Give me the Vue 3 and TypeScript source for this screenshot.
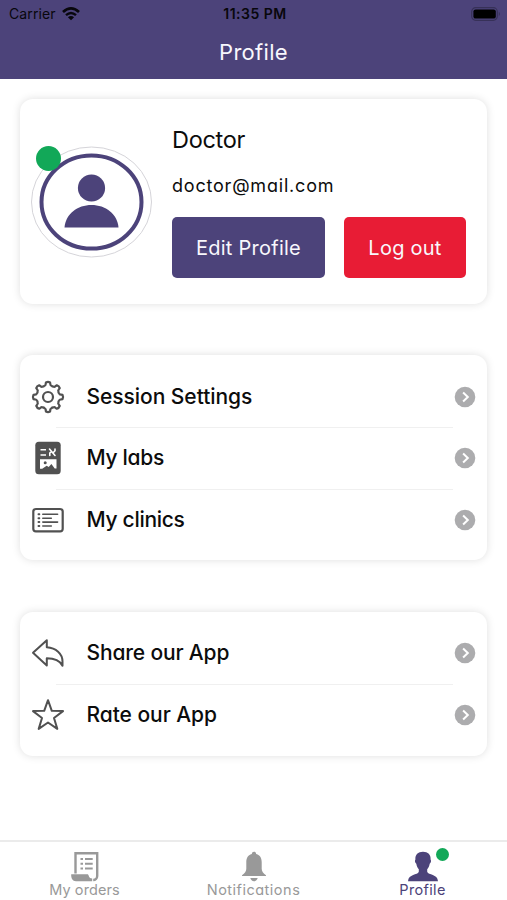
<script setup lang="ts">
interface MenuItem {
  icon: 'gear' | 'labs' | 'clinics' | 'share' | 'star'
  label: string
  cls: string
}

const groups: MenuItem[][] = [
  [
    { icon: 'gear', label: 'Session Settings', cls: 't-session' },
    { icon: 'labs', label: 'My labs', cls: 't-labs' },
    { icon: 'clinics', label: 'My clinics', cls: 't-clinics' },
  ],
  [
    { icon: 'share', label: 'Share our App', cls: 't-share' },
    { icon: 'star', label: 'Rate our App', cls: 't-rate' },
  ],
]

// Outline of an eight-toothed gear centred on (17, 17)
function gearPath(): string {
  const at = (deg: number, r: number): string => {
    const a = ((deg - 90) * Math.PI) / 180
    return `${(17 + r * Math.cos(a)).toFixed(2)} ${(17 + r * Math.sin(a)).toFixed(2)}`
  }
  let d = ''
  for (let k = 0; k < 8; k++) {
    const c = k * 45
    d += `${k ? 'L' : 'M'}${at(c - 10, 13.2)}L${at(c - 8, 14.7)}Q${at(c, 15.6)} ${at(c + 8, 14.7)}L${at(c + 10, 13.2)}`
    d += `Q${at(c + 12, 11.7)} ${at(c + 17, 11.8)}Q${at(c + 22.5, 11)} ${at(c + 28, 11.8)}Q${at(c + 33, 11.7)} ${at(c + 35, 13.2)}`
  }
  return d + 'Z'
}
const gear = gearPath()
</script>

<template>
  <div class="screen">
    <header class="header">
      <div class="status">
        <div class="carrier">
          <span>Carrier</span>
          <svg width="18" height="14" viewBox="0 0 18 14" fill="none" stroke="#08070c">
            <path d="M1 5.1Q9-2.2 17 5.1" stroke-width="2.7" />
            <path d="M4 8.1Q9 3.8 14 8.1" stroke-width="2.5" />
            <path d="M5.9 10.2Q9 7.8 12.1 10.2L9 13.3Z" fill="#08070c" stroke="none" />
          </svg>
        </div>
        <span class="time">11:35 PM</span>
        <svg class="battery" width="30" height="14" viewBox="0 0 30 14">
          <rect x=".7" y=".7" width="25.6" height="12.6" rx="4" fill="none" stroke="#373158" stroke-width="1.2" />
          <rect x="2.4" y="2.4" width="22.4" height="9.2" rx="2.2" fill="#000" />
          <path d="M27.8 4.8Q30 7 27.8 9.2Z" fill="#373158" />
        </svg>
      </div>
      <h1 class="title">Profile</h1>
    </header>

    <main class="content">
      <section class="card profile">
        <div class="avatar">
          <svg width="122" height="112" viewBox="0 0 122 112">
            <ellipse cx="60.500" cy="56" rx="60" ry="55" fill="#fff" stroke="#d5d4d9" />
            <ellipse cx="60.500" cy="56" rx="50" ry="46.6" fill="none" stroke="#4c437a" stroke-width="4" />
            <circle cx="60.500" cy="42" r="13.6" fill="#4c437a" />
            <path d="M33.500 81.500C34.500 68 46.500 59 60.500 59s26 9 27 22.500Z" fill="#4c437a" />
          </svg>
          <span class="online"></span>
        </div>
        <div class="info">
          <div class="name">Doctor</div>
          <div class="mail">doctor@mail.com</div>
          <div class="actions">
            <button class="btn edit"><span>Edit Profile</span></button>
            <button class="btn logout"><span>Log out</span></button>
          </div>
        </div>
      </section>

      <section v-for="(group, g) in groups" :key="g" class="card menu">
        <div v-for="item in group" :key="item.label" class="row">
          <svg class="icon" width="34" height="34" viewBox="0 0 34 34" fill="none" stroke="#515151" stroke-width="2.2" stroke-linejoin="round" stroke-linecap="round">
            <template v-if="item.icon === 'gear'">
              <path :d="gear" />
              <circle cx="17" cy="17" r="5" />
            </template>
            <template v-else-if="item.icon === 'labs'">
              <rect x="4.300" y=".7" width="25.400" height="32.600" rx="3.500" fill="#515151" stroke="none" />
              <path d="M9.500 8.800h5.500M9.500 14h5.500" stroke="#fff" stroke-width="1.600" stroke-linecap="butt" />
              <path d="M18.500 8l5.500 6.500M18.800 14.500v-2.500l1.600-1.600M24 8v1.800l-1.400 1.500" stroke="#fff" stroke-width="1.600" />
              <path d="M9 18.300h16.500v9.200h-1.800l-3.300-4.500-2.700 3-2-1.300-4.500 3.100H9Z" fill="#fff" stroke="none" />
              <circle cx="14.200" cy="21.700" r="1.500" fill="#515151" stroke="none" />
            </template>
            <template v-else-if="item.icon === 'clinics'">
              <rect x="2.300" y="6" width="29.400" height="22.300" rx="2.600" />
              <path d="M11.800 11.300h14.800M11.800 15.200h8.500M11.800 19.100h14.800M11.800 23h8.500" stroke-width="1.600" />
              <path d="M7.500 11.300h.8M7.500 15.200h.8M7.500 19.100h.8M7.500 23h.8" stroke-width="2" />
            </template>
            <path v-else-if="item.icon === 'share'" d="M2 16.800L15.800 4.200v7.100C25 12 31.500 17.500 31.500 25.500v4.200C28.500 24 23 22.300 15.800 22.300v7.100Z" stroke-width="2" />
            <path v-else d="M17 2.200l3.800 10.600 11.200.3-9 6.900 3.300 10.900L17 24.500l-9.300 6.400L11 20 2 13.100l11.200-.3Z" stroke-width="2" />
          </svg>
          <span class="label" :class="item.cls">{{ item.label }}</span>
          <svg class="chevron" width="22" height="22" viewBox="0 0 22 22">
            <circle cx="11" cy="11" r="10.300" fill="#acacae" />
            <path d="M9.100 6.600l4.700 4.400-4.700 4.400" fill="none" stroke="#fff" stroke-width="2" />
          </svg>
        </div>
      </section>
    </main>

    <nav class="tabs">
      <div class="tab">
        <svg width="30" height="32" viewBox="0 0 30 32">
          <path d="M5.500 22.500V2.200h21.700V25a4 4 0 0 1-4 4" fill="none" stroke="#999" stroke-width="2.400" />
          <path d="M1.200 23.200h16.500c1.200 0 .8 4.300 4.500 4.300v2.700H6C2.500 30.200 1 27 1.200 23.200Z" fill="#999" />
          <path d="M10.500 8h2.500M10.500 12.800h2.500M10.500 17.600h2.500M15 8h7.700M15 12.800h7.700M15 17.600h7.700" stroke="#999" stroke-width="2" />
        </svg>
        <span class="t-orders">My orders</span>
      </div>
      <div class="tab">
        <svg width="30" height="32" viewBox="0 0 30 32">
          <path d="M15 .8c1.300 0 2 .8 2.200 2.100 4.100 1.100 5.500 4.300 5.500 8.300v6.500c0 2.500 1.500 4.600 4.300 6.500v.8H3v-.8c2.800-1.900 4.300-4 4.300-6.500v-6.500c0-4 1.400-7.200 5.500-8.300C13 1.600 13.700.8 15 .8ZM11.300 27h7.400c-.5 2-1.800 3.200-3.700 3.200s-3.200-1.200-3.700-3.200Z" fill="#999" />
        </svg>
        <span class="t-notif">Notifications</span>
      </div>
      <div class="tab active">
        <svg width="30" height="32" viewBox="0 0 30 32">
          <path d="M15 .8c5 0 8 3 7.600 7.700.8.800.5 3.500-.9 4.200-.4 2.600-1.400 4.300-2.500 5.500v2.500c1.200 3.600 10.300 2 10.800 9.500H0c.5-7.500 9.600-5.900 10.800-9.500v-2.500c-1.100-1.200-2.100-2.900-2.500-5.500-1.400-.7-1.700-3.400-.9-4.200C7 3.800 10 .8 15 .8Z" fill="#4c437a" />
        </svg>
        <span class="t-profile">Profile</span>
        <i class="badge"></i>
      </div>
    </nav>
  </div>
</template>

<style>
body {
  margin: 0;
  background: #fff;
}
</style>

<style scoped>
.screen {
  display: flex;
  flex-direction: column;
  width: 507px;
  height: 900px;
  overflow: hidden;
  background: #fff;
  color: #0c0c0c;
  font-family: Inter, "Liberation Sans", sans-serif;
  font-feature-settings: "cv11";
  font-weight: 400;
  white-space: nowrap;
}
.header {
  height: 79px;
  flex: none;
  background: #4c437a;
}
.status {
  display: grid;
  grid-template-columns: 1fr auto 1fr;
  align-items: center;
  height: 27px;
  padding: 0 6px 0 9px;
  color: #08070c;
  font-size: 14px;
  font-feature-settings: normal;
}
.carrier {
  display: flex;
  align-items: center;
  gap: 6px;
  letter-spacing: 0.1px;
}
.time {
  font-weight: 600;
  font-size: 14px;
  letter-spacing: 0.5px;
}
.battery {
  justify-self: end;
}
.title {
  margin: 10px 0 0;
  text-align: center;
  font-size: 22px;
  line-height: 30px;
  font-weight: 400;
  letter-spacing: 0.3px;
  color: #f8f7fd;
}
.content {
  flex: 1;
  display: flex;
  flex-direction: column;
  gap: 51px;
  padding: 20px 20px 0;
}
.card {
  border-radius: 13px;
  background: #fff;
  box-shadow: 0 0 9px rgba(0, 0, 0, 0.13);
}
.profile {
  display: flex;
  box-sizing: border-box;
  height: 205px;
  padding-left: 10.5px;
}
.avatar {
  position: relative;
  width: 122px;
  height: 112px;
  margin-top: 47px;
}
.avatar svg {
  display: block;
}
.online {
  position: absolute;
  left: 5.5px;
  top: 0;
  width: 25px;
  height: 25px;
  border-radius: 50%;
  background: #12a858;
}
.info {
  margin: 25px 0 0 19.5px;
}
.name {
  font-size: 23.5px;
  line-height: 32px;
  letter-spacing: -0.3px;
}
.mail {
  margin-top: 18px;
  font-size: 18px;
  line-height: 24px;
  letter-spacing: 0.8px;
}
.actions {
  display: flex;
  gap: 19px;
  margin-top: 19px;
}
.btn {
  height: 61px;
  padding: 0;
  border: 0;
  border-radius: 5px;
  font: inherit;
  font-feature-settings: inherit;
  font-size: 20px;
  letter-spacing: 0.25px;
  color: #f8f7fc;
}
.edit {
  width: 153px;
  background: #4c437a;
}
.logout {
  width: 122px;
  background: #e81c35;
}
.menu {
  padding: 10.700px 0 9.500px;
}
.menu + .menu {
  margin-top: 0.7px;
}
.row {
  position: relative;
  display: flex;
  align-items: center;
  height: 61.700px;
  padding: 0 11px;
}
.row + .row::before {
  content: "";
  position: absolute;
  top: 0;
  left: 36px;
  right: 34px;
  height: 1px;
  background: #f0f0f0;
}
.label {
  flex: 1;
  margin-left: 21.5px;
  font-size: 21px;
  line-height: 30px;
  font-weight: 450;
  letter-spacing: -0.05px;
}
.t-labs,
.t-clinics {
  letter-spacing: -0.3px;
}
.t-share {
  letter-spacing: -0.15px;
}
.tabs {
  flex: none;
  display: grid;
  grid-template-columns: repeat(3, 1fr);
  height: 58px;
  border-top: 2px solid #ebebeb;
}
.tab {
  position: relative;
  display: flex;
  flex-direction: column;
  align-items: center;
  padding-top: 9px;
  color: #999;
  font-size: 14.500px;
  line-height: 16px;
}
.tab span {
  margin-top: -1px;
}
.t-orders {
  letter-spacing: 0.1px;
}
.t-notif {
  letter-spacing: 0.5px;
}
.active {
  color: #4c437a;
}
.t-profile {
  letter-spacing: 0.35px;
}
.badge {
  position: absolute;
  left: 98px;
  top: 5.5px;
  width: 13px;
  height: 13px;
  border-radius: 50%;
  background: #12a858;
}
</style>
